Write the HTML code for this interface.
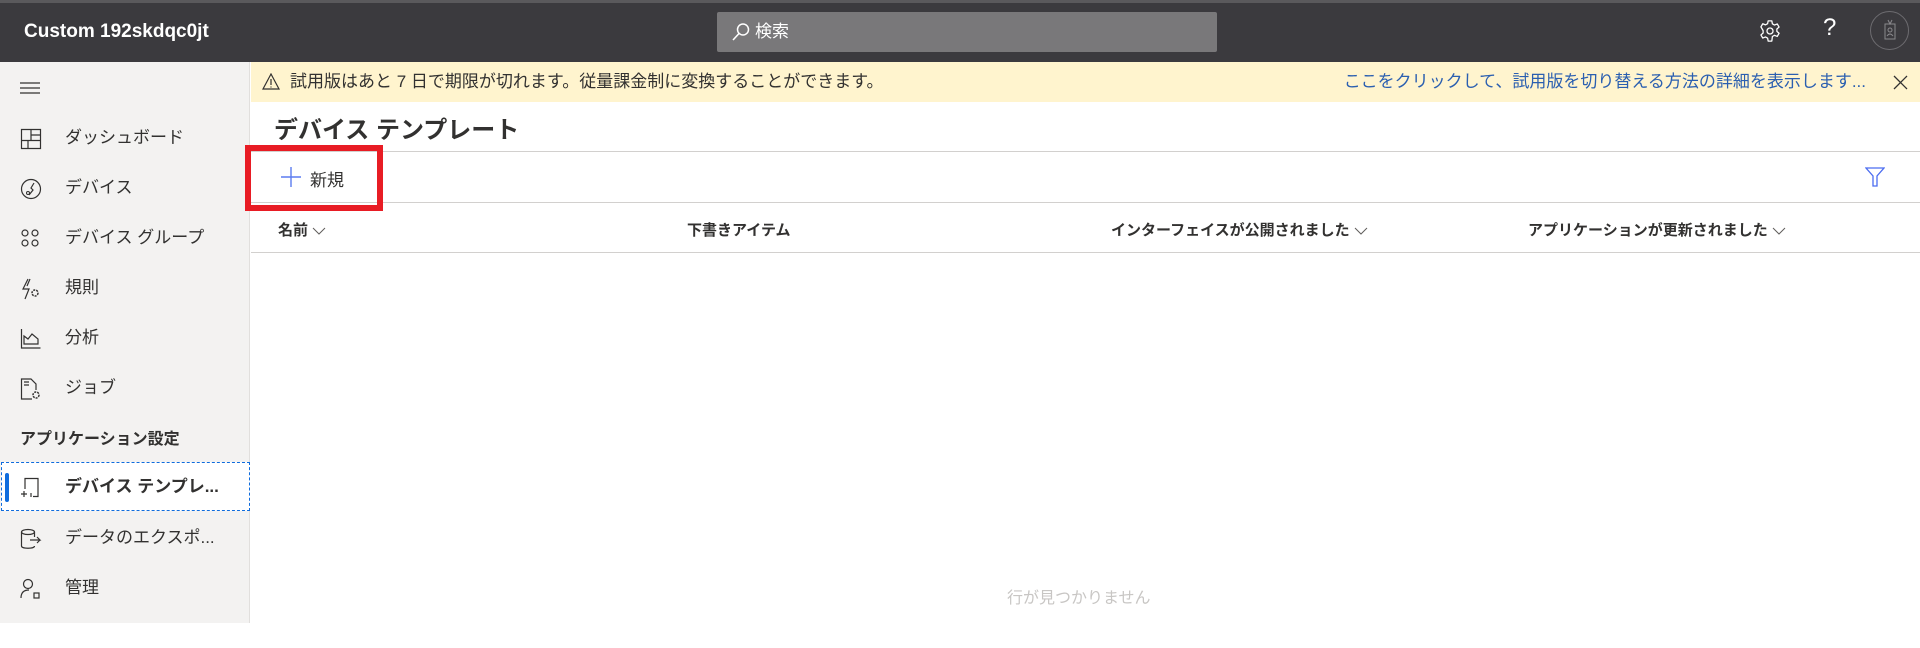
<!DOCTYPE html>
<html><head><meta charset="utf-8"><style>
*{margin:0;padding:0;box-sizing:border-box}
body{width:1920px;height:648px;overflow:hidden;background:#fff;font-family:"Liberation Sans","Noto Sans CJK JP",sans-serif;color:#323130;position:relative}
.abs{position:absolute}
#hdr{left:0;top:0;width:1920px;height:62px;background:#3b3a3e;border-top:3px solid #5a595c}
#title{left:24px;top:21px;color:#fff;font-size:19px;font-weight:bold}
#search{left:717px;top:12px;width:500px;height:40px;background:#79787a;border-radius:2px;color:#fff;font-size:17px;line-height:40px;padding-left:38px}
#side{left:0;top:62px;width:250px;height:561px;background:#f3f2f1;border-right:1px solid #e1dfdd}
.it{position:absolute;left:0;width:250px;height:36px;font-size:17px;line-height:36px}
.it span{position:absolute;left:65px}
.it svg{position:absolute;left:20px;top:8px}
#banner{left:251px;top:62px;width:1669px;height:40px;background:#fff4ce;font-size:17px;line-height:40px}
.line{position:absolute;left:251px;width:1669px;height:1px;background:#d2d0ce}
.col{position:absolute;top:219px;font-size:15px;font-weight:bold;color:#323130}
.col svg{vertical-align:middle;margin-left:4px}
</style></head><body>
<div id="hdr" class="abs"></div>
<div id="title" class="abs">Custom 192skdqc0jt</div>
<div id="search" class="abs"><svg class="abs" style="left:14px;top:10px" width="20" height="20" viewBox="0 0 20 20"><circle cx="12" cy="7.5" r="5.5" fill="none" stroke="#fff" stroke-width="1.5"/><path d="M8 11.5L2 18" stroke="#fff" stroke-width="1.6"/></svg>検索</div>
<svg class="abs" style="left:1759px;top:20px" width="22" height="22" viewBox="0 0 24 24"><path d="M10 1h4l.6 3.2 2.3 1.3 3-1.2 2 3.4-2.4 2.1v2.6l2.4 2.1-2 3.4-3-1.2-2.3 1.3L14 23h-4l-.6-3.2-2.3-1.3-3 1.2-2-3.4 2.4-2.1v-2.6L2.1 7.5l2-3.4 3 1.2 2.3-1.3z" fill="none" stroke="#fff" stroke-width="1.4" stroke-linejoin="round"/><circle cx="12" cy="12" r="3.3" fill="none" stroke="#fff" stroke-width="1.4"/></svg>
<div class="abs" style="left:1823px;top:14px;color:#fff;font-size:24px">?</div>
<div class="abs" style="left:1870px;top:11px;width:39px;height:39px;border-radius:50%;border:1px solid #6d6c70"></div>
<svg class="abs" style="left:1880px;top:19px" width="20" height="24" viewBox="0 0 20 24"><rect x="5" y="5" width="10" height="15" fill="none" stroke="#8a898c"/><circle cx="10" cy="11" r="2" fill="none" stroke="#8a898c"/><path d="M7 17q3-4 6 0M8 1l2 4 2-4" fill="none" stroke="#8a898c"/></svg>

<div id="side" class="abs">
<svg class="abs" style="left:20px;top:20px" width="22" height="12"><path d="M0 1h20M0 6h20M0 11h20" stroke="#323130" stroke-width="1.2"/></svg>
<div class="it" style="top:58px"><svg width="22" height="22" viewBox="0 0 22 22"><path d="M1.5 1.5h19v19h-19zM11 1.5v11M11 7h9.5M1.5 12.5h19M8 12.5v8" fill="none" stroke="#323130" stroke-width="1.2"/></svg><span>ダッシュボード</span></div>
<div class="it" style="top:108px"><svg width="22" height="22" viewBox="0 0 22 22"><circle cx="11" cy="11" r="9.5" fill="none" stroke="#323130" stroke-width="1.2"/><path d="M14 5l-3 5 2 2-4 5" fill="none" stroke="#323130" stroke-width="1.2"/><circle cx="8" cy="15" r="1.5" fill="none" stroke="#323130"/></svg><span>デバイス</span></div>
<div class="it" style="top:158px"><svg width="22" height="22" viewBox="0 0 22 22"><g fill="none" stroke="#323130" stroke-width="1.2"><circle cx="5" cy="5" r="3"/><circle cx="15" cy="5" r="3"/><circle cx="5" cy="15" r="3"/><circle cx="15" cy="15" r="3"/></g></svg><span>デバイス グループ</span></div>
<div class="it" style="top:208px"><svg width="22" height="22" viewBox="0 0 22 22"><path d="M8 1L3 11h6l-4 10M10 1l-3 7" fill="none" stroke="#323130" stroke-width="1.2"/><circle cx="15" cy="15" r="3" fill="none" stroke="#323130" stroke-width="1.5" stroke-dasharray="2 1"/></svg><span>規則</span></div>
<div class="it" style="top:258px"><svg width="22" height="22" viewBox="0 0 22 22"><path d="M1.5 1v19h19M4 16V8l4 3 4-5 6 5v5z" fill="none" stroke="#323130" stroke-width="1.2"/></svg><span>分析</span></div>
<div class="it" style="top:308px"><svg width="22" height="22" viewBox="0 0 22 22"><path d="M12 21H1.5V1H11l5 5v6M4 4h5M4 7h5" fill="none" stroke="#323130" stroke-width="1.2"/><circle cx="16" cy="17" r="3" fill="none" stroke="#323130" stroke-width="1.5" stroke-dasharray="2 1"/></svg><span>ジョブ</span></div>
<div class="abs" style="left:20px;top:363px;font-size:16px;font-weight:bold">アプリケーション設定</div>
<div class="abs" style="left:1px;top:400px;width:249px;height:49px;background:#fff;border:1px dashed #0f6cdd"></div>
<div class="abs" style="left:5px;top:411px;width:4px;height:29px;background:#0f6cdd;border-radius:2px"></div>
<div class="it" style="top:407px;font-weight:bold"><svg width="22" height="22" viewBox="0 0 22 22"><path d="M5 12V1.5h13v18h-5M1 17h6M4 14v6M11 16v4" fill="none" stroke="#323130" stroke-width="1.2"/></svg><span>デバイス テンプレ...</span></div>
<div class="it" style="top:458px"><svg width="22" height="22" viewBox="0 0 22 22"><ellipse cx="8" cy="4" rx="6.5" ry="2.5" fill="none" stroke="#323130" stroke-width="1.2"/><path d="M1.5 4v14c0 3 13 3 13 0M14.5 4v5M10 12h10l-3-3M20 12l-3 3" fill="none" stroke="#323130" stroke-width="1.2"/></svg><span>データのエクスポ...</span></div>
<div class="it" style="top:508px"><svg width="22" height="22" viewBox="0 0 22 22"><circle cx="8" cy="6" r="4.5" fill="none" stroke="#323130" stroke-width="1.2"/><path d="M1 20q0-8 8-8" fill="none" stroke="#323130" stroke-width="1.2"/><rect x="14" y="15" width="5" height="5" fill="none" stroke="#323130" stroke-width="1.2"/></svg><span>管理</span></div>
</div>

<div id="banner" class="abs"><svg class="abs" style="left:11px;top:11px" width="18" height="17" viewBox="0 0 18 17"><path d="M9 1L1 16h16z M9 6v6M9 13.5v1" fill="none" stroke="#323130" stroke-width="1.2"/></svg><span class="abs" style="left:39px">試用版はあと 7 日で期限が切れます。従量課金制に変換することができます。</span><span class="abs" style="right:54px;color:#2b5fb0">ここをクリックして、試用版を切り替える方法の詳細を表示します...</span><svg class="abs" style="right:12px;top:13px" width="15" height="15"><path d="M1 1l13 13M14 1L1 14" stroke="#323130" stroke-width="1.3"/></svg></div>

<div class="abs" style="left:274px;top:110px;font-size:24px;font-weight:bold">デバイス テンプレート</div>
<div class="line" style="top:151px"></div>
<div class="line" style="top:202px"></div>
<div class="line" style="top:252px"></div>
<div class="abs" style="left:245px;top:145px;width:138px;height:66px;border:6px solid #e81c24"></div>
<svg class="abs" style="left:281px;top:167px" width="20" height="20"><path d="M10 0v20M0 10h20" stroke="#5b7cf0" stroke-width="1.4"/></svg>
<div class="abs" style="left:310px;top:166px;font-size:17px">新規</div>
<svg class="abs" style="left:1865px;top:167px" width="20" height="20" viewBox="0 0 20 20"><path d="M1 1h18l-7 8v10h-4V9z" fill="none" stroke="#4a6cf0" stroke-width="1.3"/></svg>
<div class="col" style="left:278px">名前<svg width="14" height="8"><path d="M1 1l6 6 6-6" fill="none" stroke="#605e5c"/></svg></div>
<div class="col" style="left:687px">下書きアイテム</div>
<div class="col" style="left:1111px">インターフェイスが公開されました<svg width="14" height="8"><path d="M1 1l6 6 6-6" fill="none" stroke="#605e5c"/></svg></div>
<div class="col" style="left:1528px">アプリケーションが更新されました<svg width="14" height="8"><path d="M1 1l6 6 6-6" fill="none" stroke="#605e5c"/></svg></div>
<div class="abs" style="left:1007px;top:584px;font-size:16px;color:#c8c6c4">行が見つかりません</div>
</body></html>
